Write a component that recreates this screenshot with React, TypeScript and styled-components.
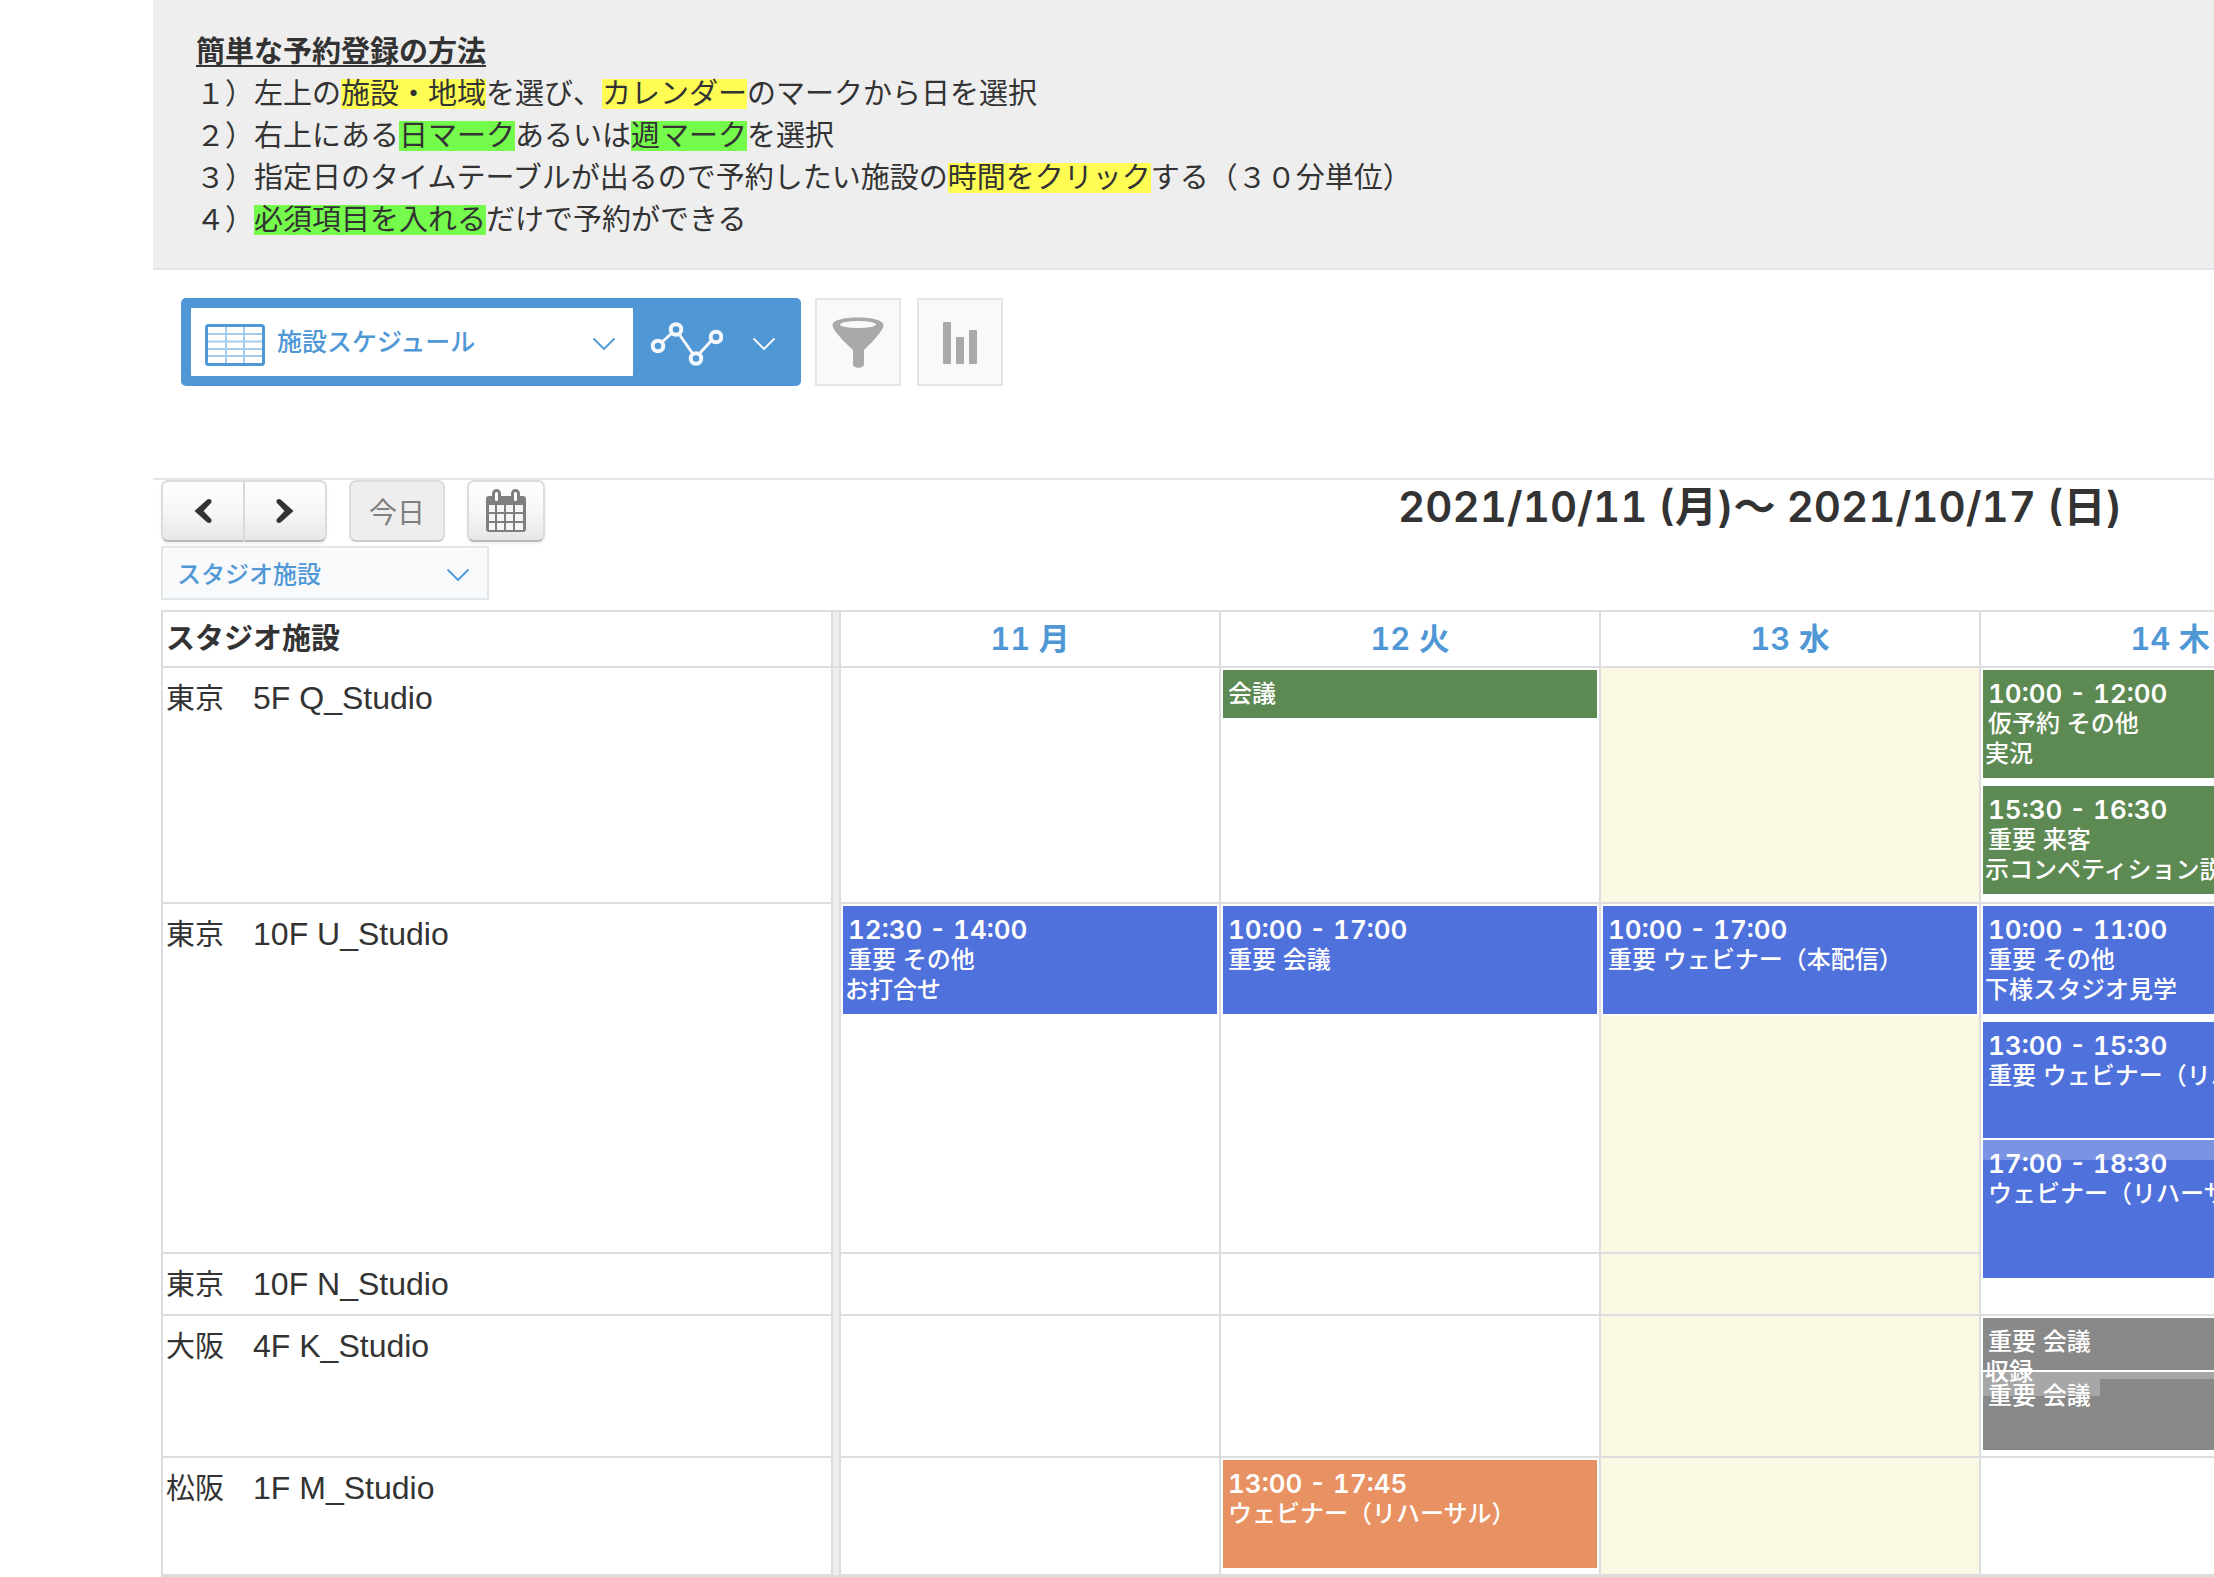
import React from "react";
import styled, { createGlobalStyle } from "styled-components";

const sans = `"Liberation Sans", "Noto Sans CJK JP", sans-serif`;
const numeric = `Inter, "Noto Sans CJK JP", sans-serif`;

const color = {
  text: "#333333",
  blue: "#5097d6",
  line: "#dddddd",
  rule: "#e1e6e6",
  controlBorder: "#e2e6e9",
  controlBg: "#f8f9fb",
};

const GlobalStyle = createGlobalStyle`
  *, *::before, *::after { box-sizing: border-box; }
  body {
    margin: 0;
    background: #fff;
    color: ${color.text};
    font-family: ${sans};
    overflow-x: hidden;
  }
  button, select { font-family: inherit; margin: 0; cursor: pointer; }
`;

const Page = styled.main`
  margin-left: 153px;
`;

/* ---------- guide banner ---------- */

const Guide = styled.section`
  padding: 31px 43px 27px;
  background: #eeeeee;
  border-bottom: 2px solid ${color.rule};
  font-size: 29px;
  line-height: 42px;
`;

const GuideTitle = styled.h1`
  margin: 0;
  font-size: inherit;
  font-weight: 700;
  text-decoration: underline;
  text-decoration-thickness: 2px;
  text-underline-offset: 3px;
`;

const GuideLine = styled.p`
  margin: 0;
`;

const Mark = styled.mark<{ $tone: "yellow" | "green" }>`
  display: inline-block;
  line-height: 30px;
  color: inherit;
  background: ${(p) => (p.$tone === "yellow" ? "#fffd54" : "#75fb4c")};
`;

/* ---------- view toolbar ---------- */

const Toolbar = styled.div`
  display: flex;
  padding: 28px 28px 92px;
  border-bottom: 2px solid ${color.rule};
`;

const ViewSwitch = styled.div`
  display: flex;
  padding: 10px;
  margin-right: 14px;
  width: 620px;
  height: 88px;
  background: ${color.blue};
  border-radius: 5px;
`;

const ViewField = styled.label`
  display: grid;
  align-items: center;
  width: 442px;
  background: #fff;
  border-radius: 1px;

  > * {
    grid-area: 1 / 1;
  }
`;

const LeadIcon = styled.span`
  display: flex;
  padding: 6px 0 0 14px;
  pointer-events: none;
`;

const TrailIcon = styled.span`
  display: flex;
  justify-self: end;
  padding: 4px 17px 0 0;
  pointer-events: none;
`;

const ViewSelect = styled.select`
  appearance: none;
  width: 100%;
  height: 100%;
  padding: 0 60px 0 86px;
  border: 0;
  background: transparent;
  color: ${color.blue};
  font-size: 25px;
  font-weight: 500;
`;

const GraphButton = styled.button`
  display: flex;
  align-items: center;
  gap: 29px;
  flex: 1;
  padding: 4px 0 0 18px;
  border: 0;
  background: transparent;
`;

const ToolButton = styled.button`
  display: flex;
  align-items: center;
  justify-content: center;
  width: 86px;
  height: 88px;
  padding: 2px 0 0;
  margin-right: 16px;
  border: 2px solid ${color.controlBorder};
  background: ${color.controlBg};
`;

/* ---------- calendar navigation ---------- */

const Schedule = styled.section`
  padding-left: 8px;
`;

const NavRow = styled.div`
  display: flex;
  gap: 22px;
  align-items: flex-start;
`;

const ButtonGroup = styled.div`
  display: flex;
`;

const NavButton = styled.button<{ $width: number; $side?: "left" | "right"; $muted?: boolean }>`
  display: flex;
  align-items: center;
  justify-content: center;
  width: ${(p) => p.$width}px;
  height: 62px;
  padding: 0;
  border: 2px solid #dcdcdc;
  border-bottom-color: ${(p) => (p.$muted ? "#cccccc" : "#b9b9b9")};
  border-left-width: ${(p) => (p.$side === "right" ? 0 : 2)}px;
  border-radius: ${(p) =>
    p.$side === "left" ? "7px 0 0 7px" : p.$side === "right" ? "0 7px 7px 0" : "7px"};
  background: ${(p) => (p.$muted ? "#eeeeee" : "linear-gradient(#ffffff, #f7f7f7 50%, #e6e6e6)")};
  box-shadow: ${(p) => (p.$muted ? "none" : "0 2px 3px rgba(0, 0, 0, 0.06)")};
  color: #7f7f7f;
  font-size: 28px;
`;

const Period = styled.h2`
  margin: 0 92px 0 auto;
  font-family: ${numeric};
  font-feature-settings: "tnum";
  font-size: 42px;
  font-weight: 600;
  line-height: 54px;
  white-space: nowrap;
`;

const FacilityField = styled.label`
  display: grid;
  align-items: center;
  width: 328px;
  height: 54px;
  margin: 4px 0 10px;
  border: 2px solid ${color.controlBorder};
  background: ${color.controlBg};
  box-shadow: inset 2px 2px 0 #fcfdfd;

  > * {
    grid-area: 1 / 1;
  }
`;

const FacilitySelect = styled.select`
  appearance: none;
  width: 100%;
  height: 100%;
  padding: 2px 50px 0 14px;
  border: 0;
  background: transparent;
  color: ${color.blue};
  font-size: 24px;
  font-weight: 500;
`;

/* ---------- schedule table ---------- */

const TableViewport = styled.div`
  overflow: hidden;
`;

const Table = styled.table`
  width: 2200px;
  table-layout: fixed;
  border-collapse: separate;
  border-spacing: 0;
  border-top: 2px solid ${color.line};

  th,
  td {
    padding: 0;
    vertical-align: top;
    border-right: 2px solid ${color.line};
    border-bottom: 2px solid ${color.line};
  }
  tbody tr:last-child > * {
    border-bottom-width: 3px;
  }
`;

const NameCol = styled.col`
  width: 672px;
`;
const SplitCol = styled.col`
  width: 8px;
`;
const DayCol = styled.col`
  width: 380px;
`;

const CornerHead = styled.th`
  && {
    padding-left: 3px;
    border-left: 2px solid ${color.line};
  }
  text-align: left;
  font-size: 29px;
  line-height: 54px;
`;

const Splitter = styled.td`
  background: #eeeeee;
`;

const DayHead = styled.th`
  color: ${color.blue};
  font-family: ${numeric};
  font-feature-settings: "tnum";
  font-size: 31px;
  font-weight: 600;
  line-height: 54px;
`;

const FacilityName = styled.th`
  && {
    padding: 9px 0 0 3px;
    border-left: 2px solid ${color.line};
  }
  text-align: left;
  font-size: 29px;
  font-weight: 400;
  line-height: 42px;
`;

const RoomCode = styled.span`
  font-size: 32px;
`;

const DayCell = styled.td<{ $today: boolean }>`
  background: ${(p) => (p.$today ? "#faf7e3" : "#ffffff")};
`;

const EventList = styled.div<{ $height: number }>`
  position: relative;
  z-index: 1;
  height: ${(p) => p.$height}px;
`;

type Tone = "green" | "blue" | "gray" | "orange";

const toneColor: Record<Tone, string> = {
  green: "#5d8952",
  blue: "#4f71db",
  gray: "#898989",
  orange: "#e89263",
};

const EventCard = styled.article<{ $tone: Tone; $height: number; $stacked?: boolean }>`
  height: ${(p) => p.$height}px;
  padding: 9px 0 0 2px;
  border: 2px solid #fff;
  background-color: ${(p) => toneColor[p.$tone]};
  background-repeat: no-repeat;
  background-image: ${(p) =>
    !p.$stacked
      ? "none"
      : p.$tone === "gray"
        ? "linear-gradient(#a7a7a7, #a7a7a7), linear-gradient(#a7a7a7, #a7a7a7)"
        : "linear-gradient(#7b93e3, #7b93e3)"};
  background-size: ${(p) => (p.$tone === "gray" ? "100% 7px, 117px 24px" : "100% 20px")};
  color: #fff;
  font-size: 24px;
  font-weight: 500;
  line-height: 30px;
  white-space: nowrap;

  &:not(:first-child) {
    margin-top: ${(p) => (p.$stacked ? -2 : 4)}px;
  }
`;

const EventTime = styled.time`
  display: block;
  padding-left: 3px;
  font-family: ${numeric};
  font-feature-settings: "tnum";
  font-size: 26px;
  font-weight: 600;
`;

const EventKind = styled.div`
  padding-left: 3px;
`;

const EventNote = styled.div``;

/* ---------- icons ---------- */

const Chevron = ({ stroke }: { stroke: string }) => (
  <svg width="24" height="15" viewBox="0 0 24 15" fill="none" aria-hidden="true">
    <path d="M1.500 1.500 12 12 22.500 1.500" stroke={stroke} strokeWidth="1.800" />
  </svg>
);

const GridIcon = () => (
  <svg width="60" height="42" viewBox="0 0 60 42" fill="none" aria-hidden="true">
    <path
      d="M3 10h54M3 17.5h54M3 25h54M3 32h54M21 3v36M39 3v36"
      stroke="#a5cbec"
      strokeWidth="2"
    />
    <rect x="1.5" y="1.5" width="57" height="39" rx="2" stroke={color.blue} strokeWidth="3" />
  </svg>
);

const GraphIcon = () => (
  <svg width="72" height="44" viewBox="0 0 72 44" fill="none" stroke="#f4f8fc" aria-hidden="true">
    <path d="M11 20 21 11M28 12 42 32M49 31 60 19" strokeWidth="3" />
    <g strokeWidth="4">
      <circle cx="7" cy="24" r="5.300" />
      <circle cx="25" cy="7.5" r="5.300" />
      <circle cx="45" cy="36.5" r="5.300" />
      <circle cx="65" cy="15" r="5.300" />
    </g>
  </svg>
);

const FunnelIcon = () => (
  <svg width="52" height="52" viewBox="0 0 52 52" aria-hidden="true">
    <path
      d="M0.5 8C0.5 3 12 .5 26 .5S51.500 3 51.500 8c0 4-5 9.500-10 15.500L32 33v14c0 5-11 5-11 0V33L11 23.500C6 17.500.5 12 .5 8Z"
      fill="#a9a9a9"
    />
    <ellipse cx="26" cy="7.500" rx="18" ry="3.500" fill="#f8f9fb" />
  </svg>
);

const BarsIcon = () => (
  <svg width="36" height="42" viewBox="0 0 36 42" fill="#a9a9a9" aria-hidden="true">
    <rect x="1" y="0" width="8" height="42" rx="1" />
    <rect x="14" y="15" width="8" height="27" rx="1" />
    <rect x="27" y="8" width="8" height="34" rx="1" />
  </svg>
);

const Arrow = ({ flip }: { flip?: boolean }) => (
  <svg width="18" height="26" viewBox="0 0 18 26" aria-hidden="true">
    <path
      transform={flip ? "translate(18 0) scale(-1 1)" : undefined}
      d="M0.500 13 13 1.800C15.500 0 18 1.500 17.500 4.500L9.500 13l8 8.500c.5 3-2 4.500-4.500 2.700Z"
      fill="#333"
    />
  </svg>
);

const CalendarIcon = () => (
  <svg width="42" height="44" viewBox="0 0 42 44" aria-hidden="true">
    <rect x="1" y="7" width="40" height="36" rx="3" fill="#7f7f7f" />
    <path
      fill="#f6f6f6"
      d="M4 16h6v7H4zM12 16h7v7h-7zM21 16h7v7h-7zM30 16h8v7h-8zM4 25h6v7H4zM12 25h7v7h-7zM21 25h7v7h-7zM30 25h8v7h-8zM4 34h6v7H4zM12 34h7v7h-7zM21 34h7v7h-7zM30 34h8v7h-8z"
    />
    <rect x="8.500" y="1.500" width="6" height="12" rx="3" fill="#fff" stroke="#7f7f7f" strokeWidth="3" />
    <rect x="27.500" y="1.500" width="6" height="12" rx="3" fill="#fff" stroke="#7f7f7f" strokeWidth="3" />
  </svg>
);

/* ---------- data ---------- */

interface Booking {
  tone: Tone;
  height: number;
  time?: string;
  kind: string;
  note?: string;
  stacked?: boolean;
}

interface Facility {
  city: string;
  room: string;
  height: number;
  days: Booking[][];
}

const days = ["11 月", "12 火", "13 水", "14 木"];
const todayIndex = 2;

const facilities: Facility[] = [
  {
    city: "東京",
    room: "5F Q_Studio",
    height: 234,
    days: [
      [],
      [{ tone: "green", height: 52, kind: "会議" }],
      [],
      [
        { tone: "green", height: 112, time: "10:00 - 12:00", kind: "仮予約 その他", note: "実況" },
        { tone: "green", height: 112, time: "15:30 - 16:30", kind: "重要 来客", note: "示コンペティション説明" },
      ],
    ],
  },
  {
    city: "東京",
    room: "10F U_Studio",
    height: 348,
    days: [
      [{ tone: "blue", height: 112, time: "12:30 - 14:00", kind: "重要 その他", note: "お打合せ" }],
      [{ tone: "blue", height: 112, time: "10:00 - 17:00", kind: "重要 会議" }],
      [{ tone: "blue", height: 112, time: "10:00 - 17:00", kind: "重要 ウェビナー（本配信）" }],
      [
        { tone: "blue", height: 112, time: "10:00 - 11:00", kind: "重要 その他", note: "下様スタジオ見学" },
        { tone: "blue", height: 120, time: "13:00 - 15:30", kind: "重要 ウェビナー（リハーサル）" },
        { tone: "blue", height: 142, time: "17:00 - 18:30", kind: "ウェビナー（リハーサル）", stacked: true },
      ],
    ],
  },
  { city: "東京", room: "10F N_Studio", height: 60, days: [[], [], [], []] },
  {
    city: "大阪",
    room: "4F K_Studio",
    height: 140,
    days: [
      [],
      [],
      [],
      [
        { tone: "gray", height: 56, kind: "重要 会議", note: "収録" },
        { tone: "gray", height: 82, kind: "重要 会議", stacked: true },
      ],
    ],
  },
  {
    city: "松阪",
    room: "1F M_Studio",
    height: 116,
    days: [[], [{ tone: "orange", height: 112, time: "13:00 - 17:45", kind: "ウェビナー（リハーサル）" }], [], []],
  },
];

const Event = ({ booking }: { booking: Booking }) => (
  <EventCard $tone={booking.tone} $height={booking.height} $stacked={booking.stacked}>
    {booking.time && <EventTime>{booking.time}</EventTime>}
    <EventKind>{booking.kind}</EventKind>
    {booking.note && <EventNote>{booking.note}</EventNote>}
  </EventCard>
);

export default function App() {
  return (
    <>
      <GlobalStyle />
      <Page>
        <Guide>
          <GuideTitle>簡単な予約登録の方法</GuideTitle>
          <GuideLine>
            １）左上の<Mark $tone="yellow">施設・地域</Mark>を選び、<Mark $tone="yellow">カレンダー</Mark>
            のマークから日を選択
          </GuideLine>
          <GuideLine>
            ２）右上にある<Mark $tone="green">日マーク</Mark>あるいは<Mark $tone="green">週マーク</Mark>を選択
          </GuideLine>
          <GuideLine>
            ３）指定日のタイムテーブルが出るので予約したい施設の<Mark $tone="yellow">時間をクリック</Mark>
            する（３０分単位）
          </GuideLine>
          <GuideLine>
            ４）<Mark $tone="green">必須項目を入れる</Mark>だけで予約ができる
          </GuideLine>
        </Guide>

        <Toolbar>
          <ViewSwitch>
            <ViewField>
              <ViewSelect aria-label="表示形式" defaultValue="facility">
                <option value="facility">施設スケジュール</option>
              </ViewSelect>
              <LeadIcon>
                <GridIcon />
              </LeadIcon>
              <TrailIcon>
                <Chevron stroke={color.blue} />
              </TrailIcon>
            </ViewField>
            <GraphButton type="button" aria-label="グラフ">
              <GraphIcon />
              <Chevron stroke="#fff" />
            </GraphButton>
          </ViewSwitch>
          <ToolButton type="button" aria-label="絞り込み">
            <FunnelIcon />
          </ToolButton>
          <ToolButton type="button" aria-label="集計">
            <BarsIcon />
          </ToolButton>
        </Toolbar>

        <Schedule>
          <NavRow>
            <ButtonGroup>
              <NavButton type="button" $width={84} $side="left" aria-label="前の週">
                <Arrow />
              </NavButton>
              <NavButton type="button" $width={82} $side="right" aria-label="次の週">
                <Arrow flip />
              </NavButton>
            </ButtonGroup>
            <NavButton type="button" $width={96} $muted>
              今日
            </NavButton>
            <NavButton type="button" $width={78} aria-label="日付を選択">
              <CalendarIcon />
            </NavButton>
            <Period>2021/10/11 (月)～ 2021/10/17 (日)</Period>
          </NavRow>

          <FacilityField>
            <FacilitySelect aria-label="施設グループ" defaultValue="studio">
              <option value="studio">スタジオ施設</option>
            </FacilitySelect>
            <TrailIcon>
              <Chevron stroke={color.blue} />
            </TrailIcon>
          </FacilityField>

          <TableViewport>
            <Table>
              <colgroup>
                <NameCol />
                <SplitCol />
                {days.map((d) => (
                  <DayCol key={d} />
                ))}
              </colgroup>
              <thead>
                <tr>
                  <CornerHead scope="col">スタジオ施設</CornerHead>
                  <Splitter />
                  {days.map((d) => (
                    <DayHead key={d} scope="col">
                      {d}
                    </DayHead>
                  ))}
                </tr>
              </thead>
              <tbody>
                {facilities.map((f, row) => (
                  <tr key={f.room}>
                    <FacilityName scope="row">
                      {f.city}　<RoomCode>{f.room}</RoomCode>
                    </FacilityName>
                    {row === 0 && <Splitter rowSpan={facilities.length} />}
                    {f.days.map((bookings, i) => (
                      <DayCell key={days[i]} $today={i === todayIndex}>
                        <EventList $height={f.height}>
                          {bookings.map((b, n) => (
                            <Event key={n} booking={b} />
                          ))}
                        </EventList>
                      </DayCell>
                    ))}
                  </tr>
                ))}
              </tbody>
            </Table>
          </TableViewport>
        </Schedule>
      </Page>
    </>
  );
}
